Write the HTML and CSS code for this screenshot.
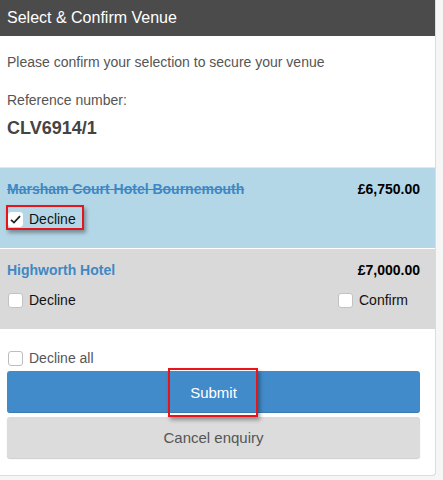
FILE: index.html
```html
<!DOCTYPE html>
<html>
<head>
<meta charset="utf-8">
<link rel="stylesheet" href="styles.css">
</head>
<body>
<div class="panel">
  <div class="panel-head">Select &amp; Confirm Venue</div>
  <div class="intro">
    <p class="lead">Please confirm your selection to secure your venue</p>
    <p class="ref-label">Reference number:</p>
    <p class="ref">CLV6914/1</p>
  </div>
  <div class="venue venue-declined">
    <div class="venue-top">
      <span class="venue-name struck">Marsham Court Hotel Bournemouth</span>
      <span class="price">£6,750.00</span>
    </div>
    <div class="venue-opts">
      <label class="opt highlight"><span class="cb cb-on"><svg width="13" height="13" viewBox="0 0 13 13"><path d="M2 6.8 L5 9.6 L11 3.2" fill="none" stroke="#222" stroke-width="1.8"/></svg></span>Decline</label>
    </div>
  </div>
  <div class="venue venue-open">
    <div class="venue-top">
      <span class="venue-name">Highworth Hotel</span>
      <span class="price">£7,000.00</span>
    </div>
    <div class="venue-opts">
      <label class="opt"><span class="cb"></span>Decline</label>
      <label class="opt opt-confirm"><span class="cb"></span>Confirm</label>
    </div>
  </div>
  <div class="actions">
    <label class="opt opt-all"><span class="cb"></span>Decline all</label>
    <button class="btn btn-primary"><span class="btn-mark"></span>Submit</button>
    <button class="btn btn-default">Cancel enquiry</button>
  </div>
</div>
</body>
</html>
```
FILE: styles.css
```css
* { box-sizing: border-box; }
body {
  margin: 0;
  background: #f6f6f6;
  font-family: "Liberation Sans", Arial, sans-serif;
  font-size: 14px;
  color: #555;
}
.panel {
  width: 436px;
  height: 476px;
  background: #fff;
  border-right: 1px solid #dcdcdc;
  border-bottom: 1px solid #dcdcdc;
  border-bottom-right-radius: 4px;
}
.panel-head {
  height: 36px;
  line-height: 36px;
  padding-left: 7px;
  background: #4b4b4b;
  color: #fff;
  font-size: 16px;
}
.intro {
  padding: 16px 7px 27px;
  border-bottom: 1px solid #e1e7ea;
}
.intro p { margin: 0; line-height: 20px; }
.ref-label { margin-top: 18px !important; }
.ref {
  margin-top: 6px !important;
  font-size: 18px;
  font-weight: bold;
  line-height: 24px !important;
  color: #444;
}
.venue {
  padding: 11px 15px 19px 7px;
  border-bottom: 1px solid #fff;
}
.venue-declined { background: #b4d7e7; }
.venue-open { background: #d9d9d9; }
.venue-top {
  display: flex;
  justify-content: space-between;
  line-height: 20px;
  font-weight: bold;
}
.venue-name { color: #3f88c4; }
.struck { text-decoration: line-through; }
.price { color: #000; }
.venue-opts {
  margin-top: 10px;
  display: flex;
  justify-content: space-between;
}
.opt {
  display: inline-flex;
  align-items: center;
  line-height: 20px;
  color: #111;
}
.cb {
  width: 15px;
  height: 15px;
  margin: 0 6px 0 1px;
  background: #fff;
  border: 1px solid #c2c2c2;
  border-radius: 3px;
  display: inline-flex;
  align-items: center;
  justify-content: center;
}
.cb-on { border-color: #fff; }
.highlight { position: relative; }
.highlight::after {
  content: "";
  position: absolute;
  left: -1px;
  right: -8px;
  top: -4px;
  bottom: -1px;
  border: 2px solid #e8141b;
  box-shadow: 2px 3px 4px rgba(0, 0, 0, 0.35);
}
.opt-confirm { width: 83px; }
.actions {
  padding: 18px 15px 0 7px;
  display: flex;
  flex-direction: column;
}
.opt-all { color: #555; }
.opt-all .cb { border-color: #bdbdbd; }
.btn {
  font-family: "Liberation Sans", Arial, sans-serif;
  font-size: 15px;
  height: 42px;
  border: 0;
  border-radius: 3px;
  width: 100%;
}
.btn-primary {
  margin-top: 3px;
  padding-top: 3px;
  background: #428bca;
  color: #fff;
  position: relative;
  border-bottom: 1px solid #3a7bb4;
}
.btn-mark {
  position: absolute;
  left: 161px;
  top: -3px;
  width: 90px;
  height: 49px;
  border: 2px solid #e8141b;
  box-shadow: 2px 3px 4px rgba(0, 0, 0, 0.35);
}
.btn-default {
  margin-top: 4px;
  height: 41px;
  background: #dcdcdc;
  color: #555;
  box-shadow: 0 1px 1px rgba(0, 0, 0, 0.2);
}
```
